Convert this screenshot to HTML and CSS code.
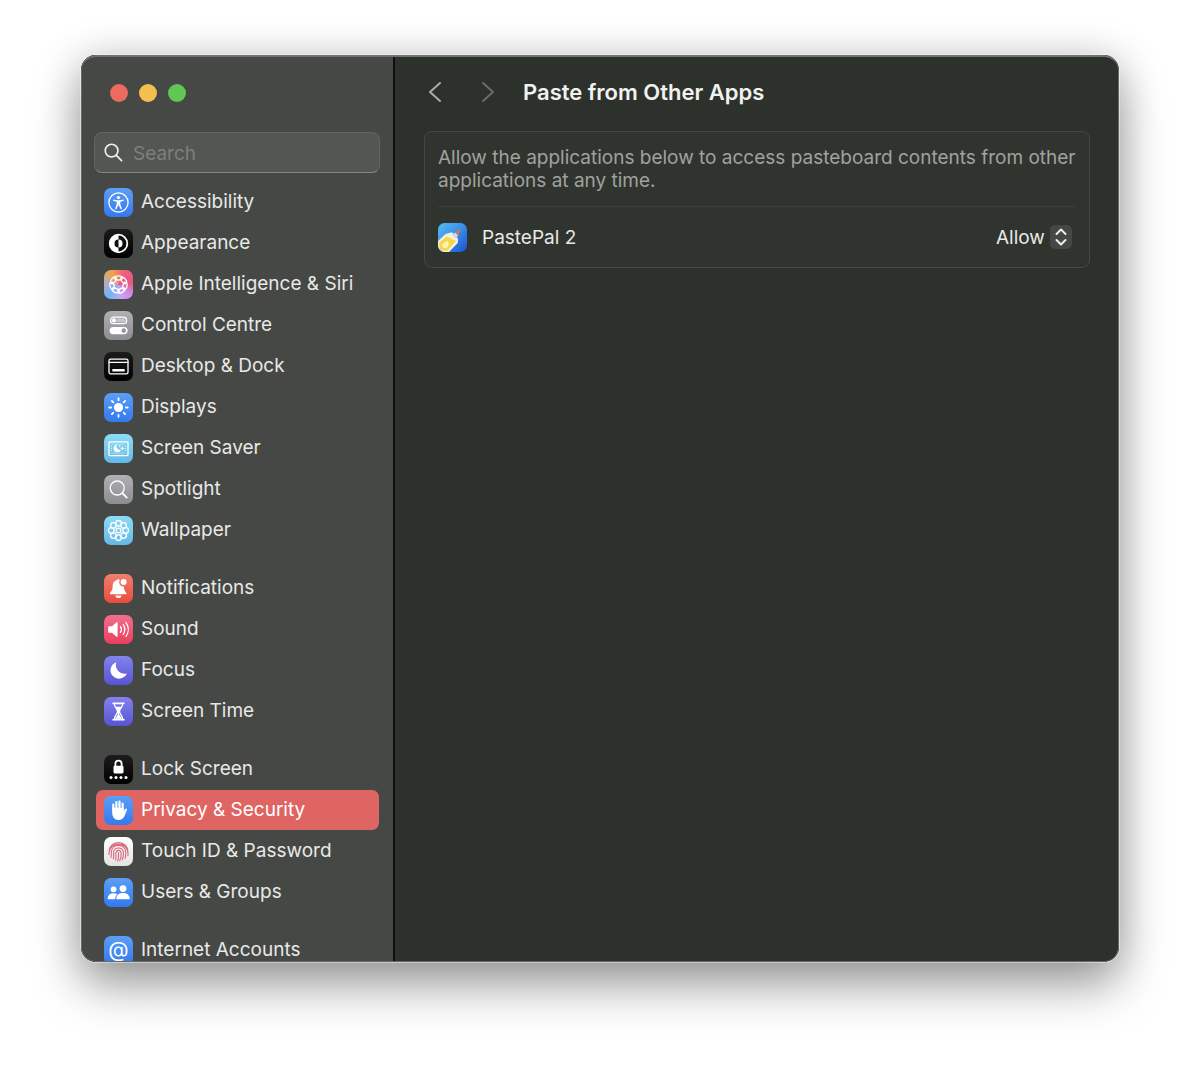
FILE: index.html
```html
<!DOCTYPE html>
<html lang="en-GB">
<head>
<meta charset="utf-8">
<meta name="viewport" content="width=device-width, initial-scale=1">
<title>Paste from Other Apps</title>
<link rel="stylesheet" href="styles.css">
</head>
<body>
<div class="window">
  <aside class="sidebar">
    <div class="lights">
      <button class="light light-close" type="button" aria-label="Close"></button>
      <button class="light light-minimise" type="button" aria-label="Minimise"></button>
      <button class="light light-zoom" type="button" aria-label="Zoom"></button>
    </div>
    <label class="search">
      <svg class="search-icon" viewBox="0 0 20 20" aria-hidden="true"><circle cx="8" cy="8" r="6.7"/><path d="M13 13l5.500 5.500"/></svg>
      <input class="search-input" type="search" placeholder="Search" aria-label="Search">
    </label>
    <nav class="nav" aria-label="Settings">
      <ul class="group">
        <li><a class="item" href="#accessibility">
          <svg class="tile blue" viewBox="0 0 29 29"><circle class="line" cx="14.500" cy="14.500" r="9.600"/><circle class="solid" cx="14.500" cy="9.600" r="1.700"/><path class="solid" d="M9.300 11.600q5.200 1.500 10.400 0l.2 1.100-3.600 1v2.600l1.700 4.800-1.200.4-2.300-4.800-2.300 4.800-1.200-.4 1.700-4.800v-2.600l-3.600-1z"/></svg>
          Accessibility</a></li>
        <li><a class="item" href="#appearance">
          <svg class="tile black" viewBox="0 0 29 29"><circle class="line thick" cx="14.500" cy="14.500" r="8.800"/><path class="solid" d="M14.500 5.700a8.800 8.800 0 0 0 0 17.600v-4.800a4 4 0 0 1 0-8z"/><path class="solid" d="M14.500 10.500a4 4 0 0 1 0 8z"/></svg>
          Appearance</a></li>
        <li><a class="item" href="#siri">
          <svg class="tile siri" viewBox="0 0 29 29"><g class="line"><ellipse cx="14.500" cy="7.900" rx="3.800" ry="2.100"/><ellipse cx="14.500" cy="7.900" rx="3.800" ry="2.100" transform="rotate(51.400 14.500 14.500)"/><ellipse cx="14.500" cy="7.900" rx="3.800" ry="2.100" transform="rotate(102.900 14.500 14.500)"/><ellipse cx="14.500" cy="7.900" rx="3.800" ry="2.100" transform="rotate(154.300 14.500 14.500)"/><ellipse cx="14.500" cy="7.900" rx="3.800" ry="2.100" transform="rotate(205.700 14.500 14.500)"/><ellipse cx="14.500" cy="7.900" rx="3.800" ry="2.100" transform="rotate(257.100 14.500 14.500)"/><ellipse cx="14.500" cy="7.900" rx="3.800" ry="2.100" transform="rotate(308.600 14.500 14.500)"/></g></svg>
          Apple Intelligence &amp; Siri</a></li>
        <li><a class="item" href="#control-centre">
          <svg class="tile grey" viewBox="0 0 29 29"><rect class="line" x="6.600" y="6.200" width="16" height="6.400" rx="3.200"/><circle class="solid" cx="10" cy="9.400" r="2.100"/><rect class="faint" x="12.500" y="7.500" width="8.800" height="3.800" rx="1.900"/><path class="solid" fill-rule="evenodd" d="M9.300 15.900h10.600a3.700 3.700 0 0 1 0 7.400H9.300a3.700 3.700 0 0 1 0-7.400zM19.700 17.300a2.300 2.300 0 1 0 .1 0z"/></svg>
          Control Centre</a></li>
        <li><a class="item" href="#desktop">
          <svg class="tile black" viewBox="0 0 29 29"><rect class="line" x="5" y="7.200" width="19" height="14.600" rx="1.600"/><path class="line" d="M5 10.400h19"/><rect class="solid" x="8.300" y="17" width="12.400" height="2.600" rx=".5"/></svg>
          Desktop &amp; Dock</a></li>
        <li><a class="item" href="#displays">
          <svg class="tile blue" viewBox="0 0 29 29"><circle class="solid" cx="14.500" cy="14.500" r="4.600"/><path class="line thick" d="M14.500 5.200v2M14.500 21.800v2M5.200 14.500h2M21.800 14.500h2M7.900 7.900l1.400 1.400M19.700 19.700l1.400 1.400M7.900 21.100l1.400-1.400M19.700 9.300l1.400-1.400"/></svg>
          Displays</a></li>
        <li><a class="item" href="#screen-saver">
          <svg class="tile cyan" viewBox="0 0 29 29"><rect class="line" x="5" y="7.800" width="19" height="13.800" rx=".8"/><path class="dots" d="M7.500 10.200h14M7.500 19.200h14M7.500 12v6M21.500 12v6"/><path class="solid" d="M12.700 10.600a3.900 3.900 0 1 0 4.300 5.300 3.900 3.900 0 0 1-4.300-5.300zM18.400 12l.7 1.700 1.700.7-1.700.7-.7 1.700-.7-1.700-1.700-.7 1.700-.7zM15.700 10.800l.4.800.8.400-.8.400-.4.800-.4-.8-.8-.4.800-.4z"/></svg>
          Screen Saver</a></li>
        <li><a class="item" href="#spotlight">
          <svg class="tile grey" viewBox="0 0 29 29"><circle class="line" cx="13.200" cy="13" r="7"/><path class="line thick" d="M18.300 18.200l4.500 4.400"/></svg>
          Spotlight</a></li>
        <li><a class="item" href="#wallpaper">
          <svg class="tile cyan" viewBox="0 0 29 29"><g class="line"><circle cx="14.500" cy="14.500" r="2.300"/><circle cx="14.500" cy="7.300" r="2.800"/><circle cx="19.600" cy="9.400" r="2.800"/><circle cx="21.700" cy="14.500" r="2.800"/><circle cx="19.600" cy="19.600" r="2.800"/><circle cx="14.500" cy="21.700" r="2.800"/><circle cx="9.400" cy="19.600" r="2.800"/><circle cx="7.300" cy="14.500" r="2.800"/><circle cx="9.400" cy="9.400" r="2.800"/></g></svg>
          Wallpaper</a></li>
      </ul>
      <ul class="group">
        <li><a class="item" href="#notifications">
          <svg class="tile red" viewBox="0 0 29 29"><path class="solid" d="M14.300 5.200c.7 0 1.200.3 1.500.8a4.200 4.200 0 0 0 4 6.500c.2 3.200.8 4.400 2.200 5.900.9.900.5 1.900-.6 1.900H7c-1.100 0-1.500-1-.6-1.900 1.700-1.700 2.200-3.200 2.300-6.900.1-2.700 1.600-4.500 3.800-5.200.3-.7.900-1.100 1.800-1.100zM11.500 21.500h5.800a2.900 2.600 0 0 1-5.800 0z"/><circle class="solid" cx="19.600" cy="8.100" r="3"/></svg>
          Notifications</a></li>
        <li><a class="item" href="#sound">
          <svg class="tile pink" viewBox="0 0 29 29"><path class="solid" d="M4.200 12.200q0-.9.900-.9h2.900l4.300-3.900q1.300-.9 1.300.5v13.200q0 1.400-1.300.5L8 17.700H5.100q-.9 0-.9-.9z"/><path class="line" d="M16.400 11.600a5 5 0 0 1 0 5.800M19.200 9.700a8.300 8.300 0 0 1 0 9.600M22 7.600a11.800 11.800 0 0 1 0 13.800"/></svg>
          Sound</a></li>
        <li><a class="item" href="#focus">
          <svg class="tile indigo" viewBox="0 0 29 29"><path class="solid" d="M12.300 6.200a8.500 8.500 0 1 0 10.600 11.300A8.800 8.800 0 0 1 12.300 6.200z"/></svg>
          Focus</a></li>
        <li><a class="item" href="#screen-time">
          <svg class="tile indigo" viewBox="0 0 29 29"><path class="line thick" d="M9.200 6.300h10.600M9.200 22.700h10.600"/><path class="line" d="M10.300 6.500c0 4.500 3.200 5 3.200 8s-3.200 3.500-3.200 8M18.700 6.500c0 4.500-3.200 5-3.200 8s3.200 3.500 3.200 8"/><path class="solid" d="M11.200 9.800h6.600q-2.100 3-2.600 4.700v3.200l2.900 4.100h-7.200l2.900-4.100v-3.200q-.5-1.700-2.600-4.700z"/></svg>
          Screen Time</a></li>
      </ul>
      <ul class="group">
        <li><a class="item" href="#lock-screen">
          <svg class="tile black" viewBox="0 0 29 29"><path class="line thick" d="M11.400 11.500V8.800a3.100 3.100 0 0 1 6.200 0v2.700"/><rect class="solid" x="9.500" y="10.800" width="10" height="7.600" rx="1.300"/><circle class="solid" cx="7" cy="22.500" r="1.500"/><circle class="solid" cx="12" cy="22.500" r="1.500"/><circle class="solid" cx="17" cy="22.500" r="1.500"/><circle class="solid" cx="22" cy="22.500" r="1.500"/></svg>
          Lock Screen</a></li>
        <li><a class="item selected" href="#privacy" aria-current="page">
          <svg class="tile blue" viewBox="0 0 29 29"><path class="finger" d="M9.300 14V8.600M12.400 14V6.200M15.500 14V5.700M18.600 14V7.700"/><path class="solid" d="M8.200 11.500v5c0 4.500 2.200 7.400 6.300 7.400 3.300 0 5-1.600 6.200-4.500l2.200-5.300c.5-1.500-1.200-2.100-2-.8l-1.300 2.300V12z"/></svg>
          Privacy &amp; Security</a></li>
        <li><a class="item" href="#touch-id">
          <svg class="tile white" viewBox="0 0 29 29"><path class="print" d="M7.500 8.500a10 10 0 0 1 14 0M5.200 13a9.600 9.600 0 0 1 18.600 0M5 17.500c-.8-13 18.800-13.500 19-1.500v2.500M7 20.200c.8-2-.2-4 .4-6.200 2-8 14-7 14.400 1.500.1 2-.1 4-.7 5.700M9.200 21.800c1.200-3-.1-5 .5-7.200 1.500-5.500 9.500-4.500 9.800 1.400.1 2.500-.4 4.700-1.200 6.700M11.300 23c1.600-3.500.1-5.500.7-7.700 1-3 5-2.400 5.200.9.200 2.800-.5 5.200-1.500 7.600M13.500 24c1.500-3 1.200-5.500 1-8.500"/></svg>
          Touch ID &amp; Password</a></li>
        <li><a class="item" href="#users">
          <svg class="tile blue" viewBox="0 0 29 29"><circle class="solid" cx="9.600" cy="11.300" r="2.900"/><path class="solid" d="M3.600 20.400c.3-3.400 2.600-5.200 6-5.200 1.500 0 2.700.4 3.700 1.100-1.300 1.200-2 2.400-2.200 4.900H4.400q-.8 0-.8-.8z"/><circle class="solid" cx="19" cy="10.600" r="3.400"/><path class="solid" d="M12.200 20.400c.3-3.700 3-5.500 6.800-5.500s6.400 1.800 6.700 5.500q0 .8-.8.800H13q-.8 0-.8-.8z"/></svg>
          Users &amp; Groups</a></li>
      </ul>
      <ul class="group">
        <li><a class="item" href="#internet-accounts">
          <svg class="tile blue" viewBox="0 0 29 29" aria-hidden="true"><text class="at" x="14.500" y="21">@</text></svg>
          Internet Accounts</a></li>
      </ul>
    </nav>
  </aside>
  <main class="main">
    <header class="toolbar">
      <div class="arrows">
        <button class="arrow" type="button" aria-label="Back"><svg class="arrow-icon" viewBox="0 0 14 22"><path d="M12 2L2 11l10 9"/></svg></button>
        <button class="arrow" type="button" aria-label="Forward" disabled><svg class="arrow-icon" viewBox="0 0 14 22"><path d="M2 2l10 9-10 9"/></svg></button>
      </div>
      <h1 class="title">Paste from Other Apps</h1>
    </header>
    <section class="card">
      <p class="hint">Allow the applications below to access pasteboard contents from other applications at any time.</p>
      <div class="app">
        <svg class="app-icon" viewBox="0 0 29 29" aria-hidden="true">
          <defs>
            <linearGradient id="sky" x1="0" y1="0" x2="1" y2="1"><stop offset="0" stop-color="#55bdf3"/><stop offset=".5" stop-color="#398ee8"/><stop offset="1" stop-color="#1c50cf"/></linearGradient>
            <clipPath id="tile"><rect width="29" height="29" rx="6.500"/></clipPath>
          </defs>
          <g clip-path="url(#tile)">
            <rect width="29" height="29" fill="url(#sky)"/>
            <path d="M13.800 9.300l6.300 6.500-.4 4.200L11 29H1l-2-10 8.500-8z" fill="#f3f0df"/>
            <path d="M8.500 13.500L18 18 9 28 2 27l-1-7z" fill="#f6d64b"/>
            <path d="M9.700 17.500c1.800 3 1 6.500-1.500 7.500-3 .8-4.700-1.500-3.700-3.800 1-1.800 4-1.500 5.200-3.700z" fill="#fdf3b4"/>
            <path d="M14.300 11.800l3-2.500 3 3.200-2.600 2.700z" fill="#cfd8e6"/>
            <path d="M17 9.500l4.600-3.200q1-.3.800.8l-2.400 5z" fill="#e46e50"/>
          </g>
        </svg>
        <label class="app-name" for="access">PastePal 2</label>
        <div class="picker">
          <select class="picker-select" id="access"><option>Allow</option><option>Ask</option><option>Deny</option></select>
          <svg class="picker-icon" viewBox="0 0 22 24" aria-hidden="true"><path d="M6.500 9L11 4.500 15.500 9M6.500 15l4.500 4.500 4.500-4.500"/></svg>
        </div>
      </div>
    </section>
  </main>
</div>
</body>
</html>
```
FILE: styles.css
```css
* {
  box-sizing: border-box;
}

body {
  display: flex;
  height: 100vh;
  margin: 0;
  padding: 55px 81px 107px;
  background: #fff;
  color: #e8e9e7;
  font: 19px/24px Inter, "Liberation Sans", sans-serif;
}

.window {
  position: relative;
  display: flex;
  flex: 1;
  min-width: 0;
  border-radius: 15px;
  background: #2d312b;
  box-shadow: 0 0 0 1px rgba(255, 255, 255, .4), 0 0 40px rgba(0, 0, 0, .16), 0 24px 48px rgba(0, 0, 0, .36);
  overflow: hidden;
}

/* Light rim over both panes */
.window::after {
  content: "";
  position: absolute;
  inset: 0;
  border: 1px solid #666966;
  border-top: 2px solid #6f726e;
  border-radius: 15px;
  pointer-events: none;
}

.sidebar {
  display: flex;
  flex: none;
  flex-direction: column;
  width: 314px;
  padding: 29px 13px 0;
  border-right: 2px solid #0e100d;
  background: #464845;
}

.lights {
  display: flex;
  gap: 11px;
  padding: 0 16px;
}

.light {
  width: 18px;
  height: 18px;
  padding: 0;
  border: 0;
  border-radius: 50%;
}

.light-close { background: #ed6a5f; }
.light-minimise { background: #f5bf50; }
.light-zoom { background: #62c655; }

.search {
  display: flex;
  align-items: center;
  gap: 10px;
  height: 41px;
  margin-top: 30px;
  padding: 0 9px;
  border: 1px solid #626461;
  border-bottom-color: #858784;
  border-radius: 8px;
  background: #545653;
}

.search-icon {
  flex: none;
  width: 19px;
  height: 19px;
  fill: none;
  stroke: #f0f0ef;
  stroke-width: 1.8;
  stroke-linecap: round;
}

.search-input {
  flex: 1;
  min-width: 0;
  padding: 2px 0 0;
  border: 0;
  outline: 0;
  background: none;
  color: inherit;
  font: inherit;
}

.search-input::placeholder {
  color: #7d7f7c;
}

.nav {
  display: flex;
  flex: 1;
  flex-direction: column;
  gap: 18px;
  min-height: 0;
  margin-top: 9px;
  padding: 0 1px 0 2px;
  overflow-y: auto;
  scrollbar-width: none;
}

.group {
  display: flex;
  flex: none;
  flex-direction: column;
  gap: 1px;
  margin: 0;
  padding: 0;
  list-style: none;
}

.item {
  display: flex;
  align-items: center;
  gap: 8px;
  height: 40px;
  padding: 0 8px;
  border-radius: 7px;
  color: inherit;
  text-decoration: none;
  white-space: nowrap;
}

.selected {
  background: #df6562;
  color: #fff;
}

.tile {
  flex: none;
  width: 29px;
  height: 29px;
  border-radius: 7px;
}

.blue { background: linear-gradient(#5b9ff5, #3478f0); }
.black { background: linear-gradient(#1c1c1c, #000); }
.grey { background: linear-gradient(#b0afb4, #8d8c91); }
.cyan { background: linear-gradient(#8bdcf6, #64b8e6); }
.red { background: linear-gradient(#f08070, #ea4b3c); }
.pink { background: linear-gradient(#f0708c, #ea3f5f); }
.indigo { background: linear-gradient(#8482ee, #5754d2); }
.white { background: linear-gradient(#fff, #e2e2e2); }
.siri { background: conic-gradient(from 20deg, #ee6283, #e8557c 60deg, #d08be8 110deg, #c7a7f5 150deg, #72b4f4 200deg, #b5a9c8 255deg, #f0a648 310deg, #ee6283); }

.line {
  fill: none;
  stroke: #fff;
  stroke-width: 1.3;
  stroke-linecap: round;
}

.thick { stroke-width: 1.8; }
.solid { fill: #fff; }
.faint { fill: #fff; opacity: .4; }

.dots {
  fill: none;
  stroke: #d8f3fd;
  stroke-width: 1;
  stroke-dasharray: 1 1;
}

.finger {
  fill: none;
  stroke: #fff;
  stroke-width: 2.2;
  stroke-linecap: round;
}

.print {
  fill: none;
  stroke: #d9667a;
  stroke-width: 1.1;
  stroke-linecap: round;
}

.at {
  fill: #fff;
  font-size: 21px;
  text-anchor: middle;
}

.main {
  flex: 1;
  min-width: 0;
  padding: 17px 29px;
}

.toolbar {
  display: flex;
  align-items: center;
  height: 40px;
}

.arrows {
  display: flex;
  gap: 7px;
}

.arrow {
  display: flex;
  align-items: center;
  width: 46px;
  height: 40px;
  padding: 0 4px;
  border: 0;
  background: none;
  color: #a9aba8;
}

.arrow:disabled {
  color: #686b67;
}

.arrow-icon {
  width: 14px;
  height: 22px;
  fill: none;
  stroke: currentColor;
  stroke-width: 2;
  stroke-linecap: round;
  stroke-linejoin: round;
}

.title {
  margin: 0;
  color: #f1f2f0;
  font-size: 22px;
  font-weight: 600;
  line-height: 28px;
}

.card {
  margin-top: 19px;
  border: 1px solid #444743;
  border-radius: 8px;
  background: #30342f;
}

.hint {
  margin: 0;
  padding: 14px 0 14px 13px;
  color: #a0a29f;
  line-height: 23px;
}

.app {
  display: flex;
  align-items: center;
  height: 61px;
  margin: 0 14px 0 13px;
  border-top: 1px solid #3c3f3a;
}

.app-icon {
  flex: none;
  width: 29px;
  height: 29px;
}

.app-name {
  flex: 1;
  padding: 2px 15px 0;
}

.picker {
  display: grid;
  align-items: center;
  padding-right: 3px;
}

.picker-select {
  grid-area: 1 / 1;
  height: 26px;
  padding: 2px 27px 0 0;
  border: 0;
  appearance: none;
  background: none;
  color: inherit;
  font: inherit;
}

.picker-icon {
  grid-area: 1 / 1;
  justify-self: end;
  width: 22px;
  height: 24px;
  border-radius: 5px;
  background: #444743;
  fill: none;
  stroke: #eceeeb;
  stroke-width: 2;
  stroke-linecap: round;
  stroke-linejoin: round;
  pointer-events: none;
}
```
